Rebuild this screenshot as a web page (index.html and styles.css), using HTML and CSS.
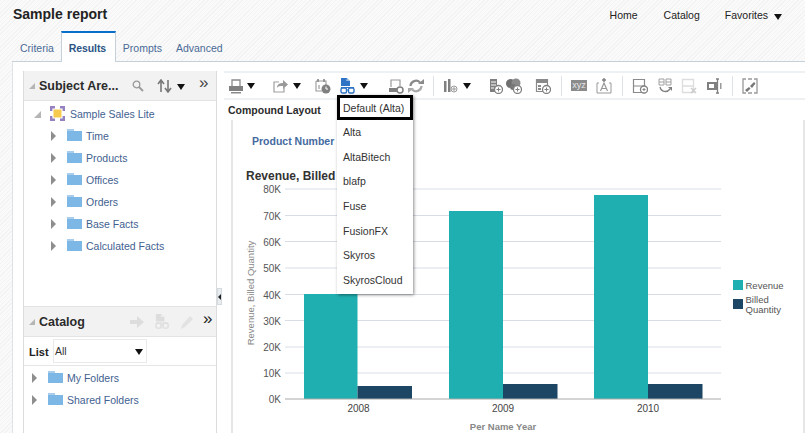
FILE: index.html
```html
<!DOCTYPE html>
<html lang="en">
<head>
<meta charset="utf-8">
<title>Sample report</title>
<link rel="stylesheet" href="styles.css">
</head>
<body>
<svg class="defs" aria-hidden="true">
  <symbol id="folder" viewBox="0 0 15 12">
    <path d="M0 0h7v2H0z" fill="#a9cdec"/>
    <path d="M0 2h15v10H0z" fill="#7db7e6"/>
  </symbol>
  <symbol id="docglass" viewBox="0 0 16 16">
    <path d="M1 0h6l3 3v5H1z"/>
    <path d="M6 3h4L7 0z" fill="#fff" opacity=".5"/>
    <path d="M1 9h13v1H1z"/>
    <rect x="1" y="10" width="5.500" height="5" rx="1.500" fill="none" stroke="currentColor" stroke-width="1.400"/>
    <rect x="8.500" y="10" width="5.500" height="5" rx="1.500" fill="none" stroke="currentColor" stroke-width="1.400"/>
    <path d="M6 12h3" stroke="currentColor"/>
  </symbol>
</svg>

<header class="top">
  <h1 class="title">Sample report</h1>
  <nav class="links">
    <a class="link">Home</a>
    <a class="link">Catalog</a>
    <a class="link link-fav">Favorites<i class="caret caret-fav"></i></a>
  </nav>
</header>

<div class="tabs">
  <a class="tab">Criteria</a>
  <a class="tab tab-on">Results</a>
  <a class="tab">Prompts</a>
  <a class="tab">Advanced</a>
</div>

<main class="panel">
  <aside class="side">
    <section class="subject">
      <div class="phead">
        <i class="tri"></i>
        <span class="ptitle">Subject Are...</span>
        <svg class="pic search" viewBox="0 0 12 12"><circle cx="4.500" cy="4.500" r="3.300" fill="none" stroke="#999" stroke-width="1.300"/><path d="M7 7l4 4" stroke="#999" stroke-width="1.800"/></svg>
        <svg class="pic updown" viewBox="0 0 15 14"><path d="M4 13V2M1 5l3-4 3 4" fill="none" stroke="#777" stroke-width="1.600"/><path d="M11 1v11M8 9l3 4 3-4" fill="none" stroke="#777" stroke-width="1.600"/></svg>
        <i class="caret caret-sort"></i>
        <span class="more">»</span>
      </div>
      <ul class="tree">
        <li class="node root">
          <i class="tri tri-root"></i>
          <svg class="cube" viewBox="0 0 15 15"><path d="M1.200 5V1.200H5M10 1.200h3.800V5M13.800 10v3.800H10M5 13.800H1.200V10" fill="none" stroke="#9580c0" stroke-width="2.400"/><rect x="3.500" y="3.500" width="8" height="8" fill="#f6c94f"/></svg>
          <span>Sample Sales Lite</span>
        </li>
        <li class="node"><i class="arrow"></i><svg class="folder"><use href="#folder"/></svg><span>Time</span></li>
        <li class="node"><i class="arrow"></i><svg class="folder"><use href="#folder"/></svg><span>Products</span></li>
        <li class="node"><i class="arrow"></i><svg class="folder"><use href="#folder"/></svg><span>Offices</span></li>
        <li class="node"><i class="arrow"></i><svg class="folder"><use href="#folder"/></svg><span>Orders</span></li>
        <li class="node"><i class="arrow"></i><svg class="folder"><use href="#folder"/></svg><span>Base Facts</span></li>
        <li class="node"><i class="arrow"></i><svg class="folder"><use href="#folder"/></svg><span>Calculated Facts</span></li>
      </ul>
    </section>
    <section class="catalog">
      <div class="phead phead-cat">
        <i class="tri"></i>
        <span class="ptitle">Catalog</span>
        <svg class="pic cat1" viewBox="0 0 14 12"><path d="M0 4h7V0l7 6-7 6V8H0z" fill="#ddd"/></svg>
        <svg class="pic cat2" viewBox="0 0 16 16"><use href="#docglass"/></svg>
        <svg class="pic cat3" viewBox="0 0 14 14"><path d="M0 14l1-4 8-9 3 3-8 8z" fill="#e2e2e2"/></svg>
        <span class="more more-cat">»</span>
      </div>
      <div class="listrow">
        <label class="listlabel">List</label>
        <div class="select"><span>All</span><i class="caret"></i></div>
      </div>
      <ul class="tree tree-cat">
        <li class="node"><i class="arrow"></i><svg class="folder"><use href="#folder"/></svg><span>My Folders</span></li>
        <li class="node"><i class="arrow"></i><svg class="folder"><use href="#folder"/></svg><span>Shared Folders</span></li>
      </ul>
    </section>
  </aside>

  <div class="split"><div class="grip"><i></i></div></div>

  <section class="work">
    <div class="toolbar">
      <svg class="ti print" viewBox="0 0 16 16"><path d="M4 8V2h8v6" fill="none" stroke="#8a8a8a" stroke-width="1.300"/><path d="M1 8h14v5H1z" fill="#808080"/><path d="M3 14h10v1.500H3z" fill="#8a8a8a"/></svg>
      <i class="caret g3"></i>
      <svg class="ti g17" viewBox="0 0 16 16"><path d="M7 4H2v10h10v-4" fill="none" stroke="#a0a0a0" stroke-width="1.200"/><path d="M5 10c0-4 3-5 6-5V2l5 4.500L11 11V8c-3 0-5 0-6 2z" fill="#999"/></svg>
      <i class="caret g5"></i>
      <svg class="ti g14" viewBox="0 0 16 16"><path d="M1 3h10v5M1 3v10h6" fill="none" stroke="#999" stroke-width="1.100"/><path d="M3 1v3M9 1v3" stroke="#888" stroke-width="1.600"/><path d="M4 7v4" stroke="#888"/><circle cx="11" cy="11" r="4.500" fill="#808080"/><path d="M11 8.500V11h2" fill="none" stroke="#fff"/></svg>
      <svg class="ti g9 blue" viewBox="0 0 16 16"><use href="#docglass"/></svg>
      <i class="caret g4"></i>
      <svg class="ti g20" viewBox="0 0 16 16"><path d="M3 9V2h9v6" fill="none" stroke="#999" stroke-width="1.200"/><path d="M1 10h9v4H1z" fill="#808080"/><circle cx="12" cy="12" r="3" fill="#fff" stroke="#808080" stroke-width="1.500"/></svg>
      <svg class="ti g4" viewBox="0 0 16 16"><path d="M2.500 8a5.500 5.500 0 0 1 9.500-3.500" fill="none" stroke="#8a8a8a" stroke-width="2.200"/><path d="M10 6h6V1z" fill="#8a8a8a"/><path d="M13.500 8A5.500 5.500 0 0 1 4 11.500" fill="none" stroke="#aaa" stroke-width="2.200"/><path d="M6 10H0v5z" fill="#aaa"/></svg>
      <i class="sep g9"></i>
      <svg class="ti g8" viewBox="0 0 16 16"><path d="M2 3h2.500v11H2zM6 1h2.500v13H6z" fill="#808080"/><circle cx="12" cy="11" r="3" fill="none" stroke="#999"/><path d="M12 9v4M10 11h4" stroke="#999"/></svg>
      <i class="caret g5"></i>
      <svg class="ti g16" viewBox="0 0 16 16"><path d="M3 1h7v13H3z" fill="#808080"/><path d="M4 4h5M4 7h5M4 10h3" stroke="#fff"/><circle cx="11.500" cy="11.500" r="4" fill="#fff" stroke="#808080" stroke-width="1.300"/><path d="M11.500 9.500v4M9.500 11.500h4" stroke="#808080"/></svg>
      <svg class="ti g3" viewBox="0 0 16 16"><circle cx="4.500" cy="5.500" r="4.500" fill="#6f6f6f"/><circle cx="10" cy="5" r="4.500" fill="#8a8a8a"/><circle cx="7" cy="9" r="3" fill="#777"/><circle cx="11.500" cy="11.500" r="4" fill="#fff" stroke="#808080" stroke-width="1.300"/><path d="M11.500 9.500v4M9.500 11.500h4" stroke="#808080"/></svg>
      <svg class="ti g13" viewBox="0 0 16 16"><path d="M1.500 1.500h11v12h-11z" fill="none" stroke="#8a8a8a" stroke-width="1.200"/><path d="M1 1h12v4H1zM3 7h3v2H3zM3 10h3v2H3z" fill="#8a8a8a"/><circle cx="11.500" cy="11.500" r="4" fill="#fff" stroke="#808080" stroke-width="1.300"/><path d="M11.500 9.500v4M9.500 11.500h4" stroke="#808080"/></svg>
      <i class="sep g10"></i>
      <span class="xyz g9">xyz</span>
      <svg class="ti g9" viewBox="0 0 16 16"><path d="M3 5H1v10h14V5h-2" fill="none" stroke="#999"/><path d="M8 0v4M6 2h4" stroke="#808080" stroke-width="1.400"/><path d="M4.500 13L8 5l3.500 8M6 10.500h4" fill="none" stroke="#999" stroke-width="1.200"/></svg>
      <i class="sep g10"></i>
      <svg class="ti g9" viewBox="0 0 16 16"><path d="M1.500 1.500h11v13h-11zM1.500 8h11" fill="none" stroke="#8a8a8a" stroke-width="1.200"/><circle cx="12" cy="11.500" r="3.500" fill="#fff" stroke="#808080" stroke-width="1.300"/><path d="M12 10v3M10.500 11.500h3" stroke="#808080"/></svg>
      <svg class="ti g9" viewBox="0 0 16 16"><path d="M2 1h5v6H2zM9 1h5v6H9zM2 4h5M9 4h5" fill="none" stroke="#a0a0a0"/><path d="M3 9c1 5 7 6 10 2" fill="none" stroke="#808080" stroke-width="1.300"/><path d="M11 9h4v4z" fill="#808080"/></svg>
      <svg class="ti g8" viewBox="0 0 16 16"><path d="M1.500 1.500h11v13h-11zM1.500 8h11" fill="none" stroke="#ddd" stroke-width="1.300"/><path d="M10 10l5 5M15 10l-5 5" stroke="#ccc" stroke-width="1.500"/></svg>
      <svg class="ti g9" viewBox="0 0 16 16"><path d="M1 4h11v8H1z" fill="#808080"/><path d="M3 6h5v4H3z" fill="#fff"/><path d="M10 1h3M10 15h3M11.500 1v14" stroke="#808080" stroke-width="1.300"/><path d="M14 5h1.500v6H14z" fill="#999"/></svg>
      <i class="sep g10"></i>
      <svg class="ti g9" viewBox="0 0 16 16"><path d="M4 1H1v14h3M12 1h3v14h-3M6 1h4M6 15h4" fill="none" stroke="#999" stroke-width="1.300"/><path d="M3 12l4-3 1.500 1.500L5 14zM8 8l4-4 1.500 1.500L10 10z" fill="#777"/></svg>
    </div>

    <h2 class="layout-title">Compound Layout</h2>
    <div class="view">
      <div class="prompt">Product Number</div>
      <div class="chart-title">Revenue, Billed Quantity</div>
      <svg class="chart" viewBox="233 184 569 249">
        <g class="grid">
          <path d="M285 189H721M285 215.500H721M285 241.500H721M285 268H721M285 294.500H721M285 320.500H721M285 347H721M285 373H721"/>
        </g>
        <g class="yl">
          <text x="281" y="193">80K</text>
          <text x="281" y="219.500">70K</text>
          <text x="281" y="245.500">60K</text>
          <text x="281" y="272">50K</text>
          <text x="281" y="298.500">40K</text>
          <text x="281" y="324.500">30K</text>
          <text x="281" y="351">20K</text>
          <text x="281" y="377">10K</text>
          <text x="281" y="403">0K</text>
        </g>
        <text class="ytitle" transform="translate(253.500 293) rotate(-90)">Revenue, Billed Quantity</text>
        <rect class="teal" x="304" y="294" width="53.500" height="105"/>
        <rect class="navy" x="357.500" y="386" width="54.500" height="13"/>
        <rect class="teal" x="449" y="211" width="54" height="188"/>
        <rect class="navy" x="503" y="384" width="54.500" height="15"/>
        <rect class="teal" x="594" y="195" width="54" height="204"/>
        <rect class="navy" x="648" y="384" width="54.500" height="15"/>
        <path class="axis" d="M285 399H721"/>
        <g class="xl">
          <text x="358.500" y="412">2008</text>
          <text x="503" y="412">2009</text>
          <text x="648" y="412">2010</text>
        </g>
        <text class="xtitle" x="503" y="430">Per Name Year</text>
        <rect class="teal" x="733" y="280" width="10" height="10"/>
        <rect class="navy" x="733" y="299" width="10" height="10"/>
        <g class="legend">
          <text x="745.500" y="288.500">Revenue</text>
          <text x="745.500" y="303">Billed</text>
          <text x="745.500" y="312.500">Quantity</text>
        </g>
      </svg>
    </div>

    <ul class="menu">
      <li class="mi mi-on">Default (Alta)</li>
      <li class="mi">Alta</li>
      <li class="mi">AltaBitech</li>
      <li class="mi">blafp</li>
      <li class="mi">Fuse</li>
      <li class="mi">FusionFX</li>
      <li class="mi">Skyros</li>
      <li class="mi">SkyrosCloud</li>
    </ul>
  </section>
</main>
</body>
</html>
```
FILE: styles.css
```css
* { box-sizing: border-box; }
html, body { margin: 0; padding: 0; }
body {
  width: 805px;
  height: 433px;
  overflow: hidden;
  font-family: "Liberation Sans", Arial, sans-serif;
  color: #333;
  background: repeating-linear-gradient(135deg, #f3f3f3 0 1px, #fafafa 1px 3px);
}
ul { list-style: none; margin: 0; padding: 0; }
i { display: block; }
.defs { position: absolute; width: 0; height: 0; }

.top { display: flex; justify-content: space-between; height: 31px; padding-left: 13px; }
.title { margin: 6px 0 0; font-size: 14px; line-height: 17px; font-weight: bold; color: #222; }
.links { display: flex; padding-top: 9px; padding-right: 23px; font-size: 10.500px; line-height: 13px; color: #222; }
.link { display: flex; align-items: center; height: 13px; margin-left: 26px; }
.link-fav { margin-left: 25px; }
.caret { width: 0; height: 0; border-left: 4.500px solid transparent; border-right: 4.500px solid transparent; border-top: 6px solid #111; flex: none; }
.caret-fav { margin-left: 6px; margin-top: 2px; }

.tabs { display: flex; height: 30px; padding-left: 13px; font-size: 10.500px; color: #4a6a96; }
.tab { padding: 11px 7px 0; line-height: 13px; }
.tab-on { width: 55px; background: #fff; border: 1px solid #c6d0d9; border-top: 2px solid #0a6fc9; border-bottom: 0; padding: 9px 0 0 7px; margin-bottom: -1px; position: relative; z-index: 1; color: #2b5484; font-weight: bold; letter-spacing: -.1px; }

.panel { display: flex; height: 372px; margin-left: 12px; padding: 9px 0 0 10px; background: #fff; border-top: 1px solid #c6d0d9; border-left: 1px solid #dde3e8; }

.side { display: flex; flex-direction: column; width: 194px; flex: none; border-left: 1px solid #dcdcdc; border-right: 1px solid #dcdcdc; }
.subject { height: 235px; }
.catalog { flex: 1; }
.phead { display: flex; align-items: center; height: 30px; background: #f2f2f2; border-bottom: 1px solid #e3e3e3; padding-left: 5px; }
.phead-cat { height: 31px; border-top: 1px solid #e3e3e3; }
.tri { width: 0; height: 0; border-bottom: 6px solid #b5b5b5; border-left: 6px solid transparent; flex: none; }
.ptitle { margin-left: 4px; width: 87px; font-size: 12.500px; font-weight: bold; color: #2b2b2b; white-space: nowrap; }
.pic { flex: none; display: block; }
.search { width: 12px; height: 12px; margin-left: 6px; }
.updown { width: 15px; height: 14px; margin-left: 13px; }
.caret-sort { margin-left: 5px; margin-top: 2px; }
.more { margin-left: 14px; font-size: 17px; line-height: 16px; margin-top: -5px; color: #444; }
.cat1 { width: 14px; height: 12px; margin-left: 4px; }
.cat2 { width: 15px; height: 15px; margin-left: 11px; color: #ddd; fill: #ddd; }
.cat3 { width: 14px; height: 14px; margin-left: 11px; }
.more-cat { margin-left: 8px; color: #222; }

.tree { padding-top: 2px; font-size: 10.500px; color: #3f6190; }
.node { display: flex; align-items: center; height: 22px; padding-left: 27px; }
.root { padding-left: 10px; }
.tri-root { border-bottom-width: 7px; border-left-width: 7px; }
.cube { width: 15px; height: 15px; margin-left: 9px; margin-top: -2px; flex: none; }
.root span { margin-left: 5px; }
.arrow { width: 0; height: 0; border-left: 5px solid #8e8e8e; border-top: 5px solid transparent; border-bottom: 5px solid transparent; flex: none; }
.folder { width: 15px; height: 12px; margin-left: 11px; margin-right: 4px; margin-top: -2px; flex: none; }
.listrow { display: flex; align-items: center; height: 29px; border-bottom: 1px solid #e6e6e6; padding-left: 5px; }
.listlabel { font-size: 11px; font-weight: bold; color: #222; width: 24px; margin-top: 1px; }
.select { display: flex; justify-content: space-between; align-items: center; width: 94px; height: 24px; padding: 0 3px 1px 1px; border: 1px solid #eaeaea; font-size: 10.500px; color: #333; }
.select .caret { margin-top: 3px; }
.tree-cat { padding-top: 1px; }
.tree-cat .node { padding-left: 8px; }

.split { width: 5px; flex: none; }
.grip { width: 5px; height: 17px; margin-top: 217px; background: #e9edf0; border: 1px solid #d4dbe0; display: flex; align-items: center; justify-content: center; }
.grip i { width: 0; height: 0; border-right: 3px solid #222; border-top: 3px solid transparent; border-bottom: 3px solid transparent; }

.work { flex: 1; padding-left: 2px; position: relative; min-width: 0; }
.toolbar { display: flex; align-items: center; height: 29px; border-top: 2px solid #edf1f4; border-bottom: 2px solid #edf1f4; padding-left: 5px; }
.ti { width: 16px; height: 16px; flex: none; }
.print { margin-left: -1px; }
.blue { color: #2f74c4; fill: #2f74c4; }
.sep { width: 1px; height: 20px; background: #dde3e8; flex: none; }
.xyz { display: block; width: 16px; height: 11px; background: #8b8b8b; color: #e8e8e8; font-size: 9px; line-height: 11px; text-align: center; flex: none; }
.g3 { margin-left: 3px; }
.g4 { margin-left: 4px; }
.g5 { margin-left: 5px; }
.g8 { margin-left: 8px; }
.g9 { margin-left: 9px; }
.g10 { margin-left: 10px; }
.g13 { margin-left: 13px; }
.g14 { margin-left: 14px; }
.g16 { margin-left: 16px; }
.g17 { margin-left: 17px; }
.g20 { margin-left: 20px; }

.layout-title { margin: 4px 0 0 4px; font-size: 10.500px; line-height: 13px; font-weight: bold; color: #2b2b2b; }
.view { height: 313px; margin: 3px 0 0 7px; border-left: 2px solid #e6e6e6; border-right: 2px solid #e6e6e6; }
.prompt { padding: 15px 0 0 19px; font-size: 10.500px; line-height: 13px; font-weight: bold; color: #456a9f; }
.chart-title { margin-top: 21px; padding-left: 13px; font-size: 12px; line-height: 14px; font-weight: bold; color: #333; white-space: nowrap; }
.chart { display: block; width: 569px; height: 249px; margin-top: 1px; }
.grid path { fill: none; stroke: #d8dde5; stroke-width: 1.200; }
.axis { fill: none; stroke: #a9a9a9; stroke-width: 1.200; }
.teal { fill: #20afb0; }
.navy { fill: #1d4664; }
.yl text { font-size: 10px; fill: #555; text-anchor: end; }
.xl text { font-size: 10px; fill: #444; text-anchor: middle; }
.ytitle { font-size: 9.500px; fill: #888; text-anchor: middle; }
.xtitle { font-size: 9.500px; font-weight: bold; fill: #888; text-anchor: middle; }
.legend text { font-size: 9.500px; fill: #555; }

.menu { position: absolute; left: 115px; top: 24px; width: 76px; height: 199px; background: #fff; box-shadow: 1px 1px 3px rgba(0,0,0,.45); font-size: 10.500px; color: #333; z-index: 2; }
.mi { display: flex; align-items: center; height: 24.600px; padding-left: 6px; }
.mi-on { height: 25px; padding-left: 3px; border: 3px solid #000; }
```
